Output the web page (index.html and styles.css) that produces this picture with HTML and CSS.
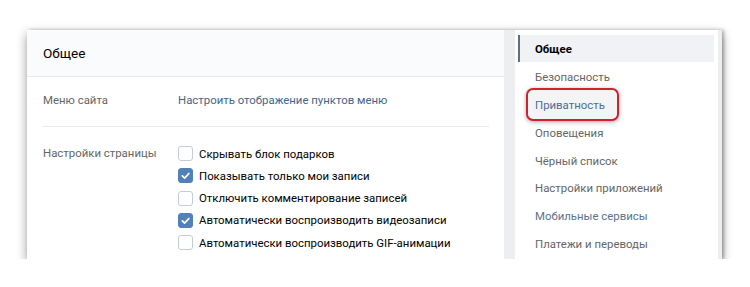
FILE: index.html
```html
<!DOCTYPE html>
<html lang="ru">
<head>
  <meta charset="UTF-8" />
  <title>Настройки</title>
  <link rel="stylesheet" href="styles.css">
</head>
<body>
  <div class="settings">
    <div class="main">
      <div class="main-head">Общее</div>
      <div class="row">
        <div class="row-label">Меню сайта</div>
        <div class="row-value"><a class="link" href="#">Настроить отображение пунктов меню</a></div>
      </div>
      <div class="divider"></div>
      <div class="row row-checks">
        <div class="row-label">Настройки страницы</div>
        <div class="checks">
          <label class="check"><span class="box"></span>Скрывать блок подарков</label>
          <label class="check"><span class="box on"></span>Показывать только мои записи</label>
          <label class="check"><span class="box"></span>Отключить комментирование записей</label>
          <label class="check"><span class="box on"></span>Автоматически воспроизводить видеозаписи</label>
          <label class="check"><span class="box"></span>Автоматически воспроизводить GIF-анимации</label>
        </div>
      </div>
    </div>

    <div class="menu">
      <div class="menu-item active">Общее</div>
      <div class="menu-item">Безопасность</div>
      <div class="menu-item marked"><span class="ring">Приватность</span></div>
      <div class="menu-item">Оповещения</div>
      <div class="menu-item">Чёрный список</div>
      <div class="menu-item">Настройки приложений</div>
      <div class="menu-item blue">Мобильные сервисы</div>
      <div class="menu-item">Платежи и переводы</div>
    </div>
  </div>
</body>
</html>
```

FILE: styles.css
```css
:root {
  --text: #222;
  --muted: #656565;
  --link: #42648b;
  --line: #e7e8ec;
  --gap: #edeef0;
  --check: #5181b8;
}

body {
  margin: 0;
  padding: 30px 0 0 27px;
  background: #fff;
  font-family: Roboto, "Noto Sans", sans-serif;
  font-size: 11.4px;
  color: var(--text);
}

/* Card */
.settings {
  width: 695px;
  height: 229px;
  display: flex;
  background: var(--gap);
  box-shadow: 0 4px 10px rgba(0, 0, 0, 0.4), 2px 0 3px rgba(0, 0, 0, 0.25);
  overflow: hidden;
}

/* Left panel */
.main {
  width: 477px;
  background: #fff;
  margin-right: 11px;
}

.main-head {
  height: 46px;
  padding-left: 16px;
  display: flex;
  align-items: center;
  font-size: 13.6px;
  color: #000;
  background: #fafbfc;
  border-bottom: 1px solid var(--line);
}

.row {
  display: flex;
  padding: 16px 16px 0;
}

.row-label {
  width: 135px;
  color: var(--muted);
}

.link {
  color: var(--link);
  text-decoration: none;
}

.divider {
  height: 1px;
  background: var(--line);
  margin: 19px 15px 0 16px;
}

.row-checks {
  padding-top: 19px;
}

.checks {
  display: flex;
  flex-direction: column;
  gap: 7.3px;
}

.check {
  display: flex;
  align-items: center;
  gap: 6px;
  height: 15px;
  color: #000;
}

.box {
  width: 13px;
  height: 13px;
  border: 1px solid #c5ccd4;
  border-radius: 3px;
  background: #fff;
  flex-shrink: 0;
}

.box.on {
  border-color: var(--check);
  background: var(--check) url("data:image/svg+xml;utf8,<svg xmlns='http://www.w3.org/2000/svg' width='13' height='13' viewBox='0 0 13 13'><path d='M3.3 6.8l2.3 2.3 4.3-4.6' fill='none' stroke='white' stroke-width='1.7' stroke-linecap='round' stroke-linejoin='round'/></svg>") no-repeat center;
}

/* Right menu */
.menu {
  flex: 1;
  background: #fff;
  padding: 5px 4px 0 3px;
  margin-right: 4px;
}

.menu-item {
  height: 27.9px;
  display: flex;
  align-items: center;
  padding-left: 15px;
  color: var(--muted);
  border-left: 2px solid transparent;
}

.menu-item.active {
  height: 27px;
  background: #f0f2f5;
  border-left-color: #5d6f82;
  font-weight: bold;
  color: #000;
  margin-bottom: 0.9px;
}

.menu-item.blue {
  color: #5a7391;
}

.marked {
  padding-left: 6px;
}

.ring {
  padding: 8px 12px 7px 7px;
  border: 2px solid #d3202f;
  border-radius: 7px;
  color: #4b6e95;
  background: #f3f4f6;
  box-shadow: 0 1px 4px rgba(0, 0, 0, 0.35);
}
```
